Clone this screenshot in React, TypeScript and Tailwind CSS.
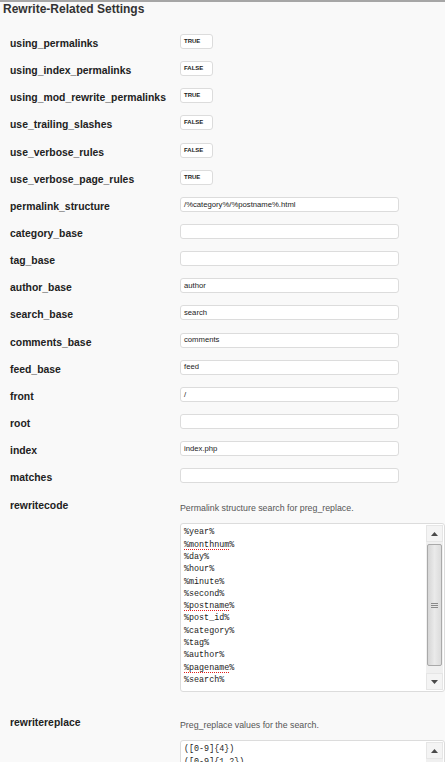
const flagRows: [string, string][] = [
  ['using_permalinks', 'TRUE'],
  ['using_index_permalinks', 'FALSE'],
  ['using_mod_rewrite_permalinks', 'TRUE'],
  ['use_trailing_slashes', 'FALSE'],
  ['use_verbose_rules', 'FALSE'],
  ['use_verbose_page_rules', 'TRUE'],
]

const textRows: [string, string][] = [
  ['permalink_structure', '/%category%/%postname%.html'],
  ['category_base', ''],
  ['tag_base', ''],
  ['author_base', 'author'],
  ['search_base', 'search'],
  ['comments_base', 'comments'],
  ['feed_base', 'feed'],
  ['front', '/'],
  ['root', ''],
  ['index', 'index.php'],
  ['matches', ''],
]

const codeLines: { text: string; flagged?: boolean }[] = [
  { text: '%year%' },
  { text: '%monthnum%', flagged: true },
  { text: '%day%' },
  { text: '%hour%' },
  { text: '%minute%' },
  { text: '%second%' },
  { text: '%postname%', flagged: true },
  { text: '%post_id%' },
  { text: '%category%' },
  { text: '%tag%' },
  { text: '%author%' },
  { text: '%pagename%', flagged: true },
  { text: '%search%' },
]

const replaceLines = ['([0-9]{4})', '([0-9]{1,2})']

const labelClass =
  "w-[180px] shrink-0 pl-[10px] text-[10.4px] leading-[13px] font-bold text-[#222] font-['Liberation_Sans',Arial,sans-serif]"

function Row({ label, children }: { label: string; children: React.ReactNode }) {
  return (
    <div className="flex items-center h-[27.15px]">
      <div className={labelClass}>{label}</div>
      <div className="mb-[4px] flex">{children}</div>
    </div>
  )
}

function Arrow({ up }: { up?: boolean }) {
  return (
    <svg width="7" height="4" viewBox="0 0 7 4">
      <path d={up ? 'M0 4 L3.5 0 L7 4 Z' : 'M0 0 L3.5 4 L7 0 Z'} fill="#4a4a4a" />
    </svg>
  )
}

function ScrollBar({ full }: { full?: boolean }) {
  return (
    <div className="w-[17px] shrink-0 mt-[1px] mb-[1px] mr-[1px] flex flex-col bg-[#f0f0f0]">
      <div className="h-[17px] flex items-center justify-center border border-[#e6e6e6] bg-[#f4f4f4]">
        <Arrow up />
      </div>
      {full && (
        <>
          <div className="flex-1 mt-[2px] mx-[1px] mb-[7px] rounded-[2px] border border-[#a9a9a9] bg-gradient-to-r from-[#d6d6d6] via-[#eaeaea] to-[#dcdcdc] flex items-center justify-center">
            <div className="flex flex-col gap-[1px]">
              <div className="w-[7px] h-px bg-[#8a8a8a]" />
              <div className="w-[7px] h-px bg-[#8a8a8a]" />
              <div className="w-[7px] h-px bg-[#8a8a8a]" />
            </div>
          </div>
          <div className="h-[17px] flex items-center justify-center border border-[#e6e6e6] bg-[#f4f4f4]">
            <Arrow />
          </div>
        </>
      )}
    </div>
  )
}

export default function App() {
  return (
    <div className="w-[445px] h-[762px] overflow-hidden bg-[#f9f9f9] border-t-2 border-[#a6a6a6]">
      <h3 className="pl-[3px] text-[12px] leading-[15px] font-bold text-[#333] font-['Liberation_Sans',Arial,sans-serif]">
        Rewrite-Related Settings
      </h3>

      <div className="mt-[13px]">
        {flagRows.map(([label, value]) => (
          <Row key={label} label={label}>
            <div className="w-[33px] h-[15px] bg-white border border-[#dcdcdc] rounded-[3px] pl-[3px] flex items-center text-[6px] font-semibold text-[#222] font-['Liberation_Sans',Arial,sans-serif]">
              {value}
            </div>
          </Row>
        ))}
        {textRows.map(([label, value]) => (
          <Row key={label} label={label}>
            <div className="w-[219px] h-[15px] bg-white border border-[#dcdcdc] rounded-[3px] pl-[3px] flex items-center text-[7.7px] text-[#222] font-['Liberation_Sans',Arial,sans-serif]">
              {value}
            </div>
          </Row>
        ))}

        <div className="flex">
          <div className={`${labelClass} pt-[8px]`}>rewritecode</div>
          <div className="flex-1 pt-[12px] pb-[17px]">
            <p className="text-[8.8px] leading-[10px] text-[#555] font-['Liberation_Sans',Arial,sans-serif]">
              Permalink structure search for preg_replace.
            </p>
            <div className="mt-[10px] h-[169px] flex bg-white border border-[#dcdcdc] rounded-[3px]">
              <div className="flex-1 pl-[3px] pt-[2px] text-[8.4px] leading-[12.3px] text-[#222] font-['Liberation_Mono','Courier_New',monospace]">
                {codeLines.map((line) =>
                  line.flagged ? (
                    <div key={line.text}>
                      <span className="underline decoration-dotted decoration-[#e02020] underline-offset-[2px]">
                        {line.text.slice(0, -1)}
                      </span>
                      %
                    </div>
                  ) : (
                    <div key={line.text}>{line.text}</div>
                  )
                )}
              </div>
              <ScrollBar full />
            </div>
          </div>
        </div>

        <div className="flex">
          <div className={`${labelClass} pt-[7px]`}>rewritereplace</div>
          <div className="flex-1 pt-[11px]">
            <p className="text-[8.8px] leading-[10px] text-[#555] font-['Liberation_Sans',Arial,sans-serif]">
              Preg_replace values for the search.
            </p>
            <div className="mt-[10px] h-[169px] flex bg-white border border-[#dcdcdc] rounded-[3px]">
              <div className="flex-1 pl-[3px] pt-[2px] text-[8.4px] leading-[12.3px] text-[#222] font-['Liberation_Mono','Courier_New',monospace]">
                {replaceLines.map((line, i) => (
                  <div key={i}>{line}</div>
                ))}
              </div>
              <ScrollBar />
            </div>
          </div>
        </div>
      </div>
    </div>
  )
}
